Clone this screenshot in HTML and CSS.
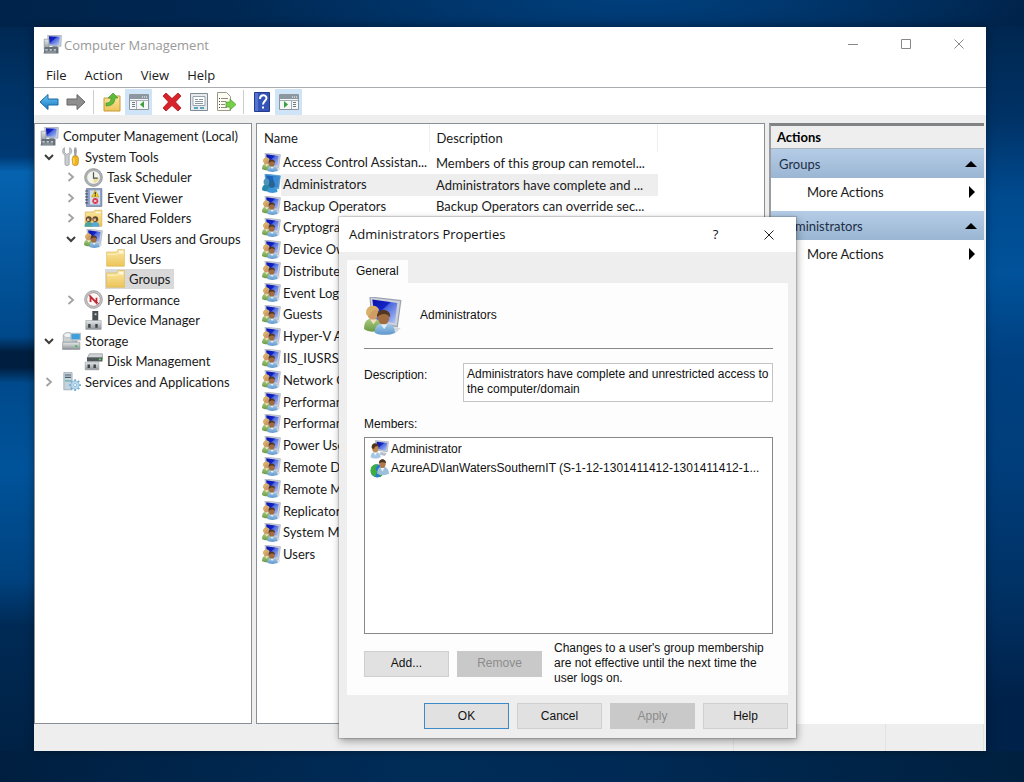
FILE: index.html
```html
<!DOCTYPE html>
<html lang="en">
<head>
    <meta charset="utf-8">
    <meta name="viewport" content="width=device-width, initial-scale=1.0">
    <title>Computer Management</title>
    <link rel="stylesheet" href="styles.css">
</head>
<body>
    <!-- shared icons -->
    <svg class="sprite" aria-hidden="true">
        <defs>
            <linearGradient id="screen" x1="0" y1="0" x2="1" y2="1">
                <stop offset="0" stop-color="#0a12a8"/>
                <stop offset=".4" stop-color="#1424c4"/>
                <stop offset=".45" stop-color="#4a66dc"/>
                <stop offset="1" stop-color="#b9cbf8"/>
            </linearGradient>
            <linearGradient id="gold" x1="0" y1="0" x2="0" y2="1">
                <stop offset="0" stop-color="#fbe7a2"/>
                <stop offset="1" stop-color="#ecc55a"/>
            </linearGradient>
            <linearGradient id="blue" x1="0" y1="0" x2="0" y2="1">
                <stop offset="0" stop-color="#6cc4f2"/>
                <stop offset="1" stop-color="#1479c4"/>
            </linearGradient>
            <linearGradient id="steel" x1="0" y1="0" x2="0" y2="1">
                <stop offset="0" stop-color="#e6e9eb"/>
                <stop offset="1" stop-color="#8b9297"/>
            </linearGradient>
            <linearGradient id="green-shirt" x1="0" y1="0" x2="0" y2="1">
                <stop offset="0" stop-color="#a9cb82"/>
                <stop offset="1" stop-color="#6b9a45"/>
            </linearGradient>
            <linearGradient id="blue-shirt" x1="0" y1="0" x2="0" y2="1">
                <stop offset="0" stop-color="#a9cdeb"/>
                <stop offset="1" stop-color="#5c97cc"/>
            </linearGradient>
        </defs>
        <symbol id="i-computer" viewBox="0 0 32 32">
            <path d="M8 0 31 1 30 19 9 18z" fill="#c9d0dd" stroke="#8d96aa"/>
            <path d="M10 2 28 3 27 17 11 16z" fill="url(#screen)"/>
            <path d="M16 18h8v5h-8z" fill="#8e959f"/>
            <path d="M2 7h8v17H2z" fill="url(#steel)" stroke="#7b838b"/>
            <path d="M3 20h23v11H1z" fill="#667078"/>
            <path d="M4 24h4v2H4zM11 24h4v2h-4zM18 24h4v2h-4zM4 28h18v1H4z" fill="#dfe5e8"/>
        </symbol>
        <symbol id="i-group" viewBox="0 0 32 32">
            <path d="M5 0 31 3 28 25 7 21z" fill="#ccd1dc" stroke="#9ba2b0"/>
            <path d="M7 2 28 5 26 22 9 19z" fill="url(#screen)"/>
            <path d="M22 25l9 1-5 5-6-2z" fill="#d6dade"/>
            <path d="M0 27c0-7 3-9 7-9s7 2 8 9c-4 3-11 3-15 0z" fill="url(#green-shirt)"/>
            <ellipse cx="7.500" cy="13.500" rx="4.800" ry="6" fill="#cf9c66"/>
            <path d="M2 15C0 6 12 5 13 12c-4-3-6 0-7 1s-1 4-4 2z" fill="#d8b168"/>
            <path d="M5 19l3 4 3-4z" fill="#f0e0c0"/>
            <path d="M9 30c0-7 4-8 8-8s9 1 9 8c-4 2.500-13 2.500-17 0z" fill="url(#blue-shirt)"/>
            <ellipse cx="16.500" cy="17.500" rx="4.800" ry="5.800" fill="#a06c40"/>
            <path d="M11 17c-1-8 12-8 11 0-3-4-8-3-11 0z" fill="#523720"/>
            <path d="M14 23l3 4 3-4z" fill="#e2eef8"/>
        </symbol>
        <symbol id="i-group-sel" viewBox="0 0 32 32">
            <path d="M5 0 31 3 28 25 7 21z" fill="#4f9ad6" stroke="#3a87c6"/>
            <path d="M7 2 28 5 26 22 9 19z" fill="#1d63b8"/>
            <path d="M18 4 28 5 26 22 22 21z" fill="#3c8bd2"/>
            <path d="M0 27c0-7 3-9 7-9s7 2 8 9c-4 3-11 3-15 0z" fill="#2c86a8"/>
            <ellipse cx="7.500" cy="13.500" rx="4.800" ry="6" fill="#4d93b8"/>
            <path d="M9 30c0-7 4-8 8-8s9 1 9 8c-4 2.500-13 2.500-17 0z" fill="#3c97d6"/>
            <ellipse cx="16.500" cy="17.500" rx="4.800" ry="5.800" fill="#27648f"/>
        </symbol>
        <symbol id="i-user" viewBox="0 0 32 32">
            <path d="M9 1 31 3 29 20 11 17z" fill="#ccd1dc" stroke="#9ba2b0"/>
            <path d="M11 3 29 5 27 18 13 15z" fill="url(#screen)"/>
            <path d="M17 20l11 2-3 5-8-2z" fill="#b6bfc9"/>
            <path d="M1 29c0-7 4-9 8-9s9 2 9 9c-5 3-13 3-17 0z" fill="#a8c7e4"/>
            <ellipse cx="9" cy="14" rx="5.500" ry="7" fill="#c08a56"/>
            <path d="M3 14C1 3 14 3 15 11c-5-1-7-1-8 4z" fill="#4e3520"/>
            <path d="M6 21l3 5 3-5z" fill="#f3f8fc"/>
        </symbol>
        <symbol id="i-globe-user" viewBox="0 0 32 32">
            <circle cx="12" cy="20" r="11" fill="#2b78cf"/>
            <path d="M2 14c4-6 8-6 11-4l-4 6 3 5-3 9c-8-3-9-9-7-16zM15 24l8 1-6 6z" fill="#3fae42"/>
            <path d="M12 25c0-9 4-12 9-12s11 3 11 12c-6 3-15 3-20 0z" fill="#9dbfdc"/>
            <ellipse cx="21" cy="8" rx="5.500" ry="7" fill="#b07a4c"/>
            <path d="M15 7c0-9 12-9 12 0-4-2-8-2-12 0z" fill="#4e3520"/>
            <path d="M18 15l3 6 3-6z" fill="#f3f8fc"/>
        </symbol>
        <symbol id="i-tools" viewBox="0 0 32 32">
            <path d="M4 1v8l3 3h3l3-3V1c5 3 4 10-1 13v15c0 3-7 3-7 0V14C0 11 0 4 4 1z" fill="#c9ced1" stroke="#7f868b"/>
            <path d="M21 1h3l1 5-1 10h-3L20 6z" fill="#989ea2"/>
            <path d="M19 15h7l2 5-1 9c-1 3-8 3-9 0l-1-9z" fill="#f0b51e" stroke="#b77a08"/>
            <path d="M20 19v9" stroke="#ffe07b" stroke-width="2"/>
        </symbol>
        <symbol id="i-clock" viewBox="0 0 32 32">
            <circle cx="16" cy="16" r="15" fill="#b1b5b9" stroke="#777c80"/>
            <circle cx="16" cy="16" r="11.500" fill="#f3f4ec" stroke="#8d9295"/>
            <path d="M16 16h9A9 9 0 0 1 16 25z" fill="#ecdd9b"/>
            <path d="M16 7v10h7" fill="none" stroke="#4a525c" stroke-width="2"/>
        </symbol>
        <symbol id="i-event" viewBox="0 0 32 32">
            <path d="M4 1h26v30H4z" fill="#8fa3c8" stroke="#50617f"/>
            <path d="M10 4h17v24H10z" fill="#d5deef"/>
            <path d="M2 5h5M2 10h5M2 15h5M2 20h5M2 25h5" stroke="#4c5669" stroke-width="2"/>
            <path d="M19 4l6 11H13z" fill="#f7d227" stroke="#b89608"/>
            <path d="M19 7v4M19 12v2" stroke="#222" stroke-width="2"/>
            <circle cx="19" cy="22" r="5" fill="#d93a4c"/>
            <path d="M17 20l4 4M21 20l-4 4" stroke="#fff" stroke-width="1.500"/>
        </symbol>
        <symbol id="i-shared" viewBox="0 0 32 32">
            <path d="M2 5h14l2-3h12v27H2z" fill="url(#gold)" stroke="#d0a23a"/>
            <path d="M20 5h8v2h-8z" fill="#fffbe8"/>
            <path d="M1 30c0-6 3-8 7-8s7 2 7 8z" fill="#4aa497"/>
            <circle cx="8" cy="17" r="5" fill="#69492f"/>
            <path d="M12 30c0-6 3-8 7-8s7 2 7 8z" fill="#58a7d6"/>
            <circle cx="19" cy="17" r="5" fill="#69492f"/>
            <path d="M5 18h4M16 18h4" stroke="#e5c49b" stroke-width="4"/>
        </symbol>
        <symbol id="i-folder" viewBox="0 0 32 32">
            <path d="M1 5h17l2-4h11v28H1z" fill="url(#gold)" stroke="#dab453"/>
            <path d="M22 3h7v4h-7z" fill="#fffbe8"/>
            <path d="M2 9h16l3-2h9" fill="none" stroke="#fff3c8" stroke-width="1.500"/>
        </symbol>
        <symbol id="i-perf" viewBox="0 0 32 32">
            <circle cx="16" cy="16" r="15" fill="#c3c6c8" stroke="#85898c"/>
            <circle cx="16" cy="16" r="11.500" fill="#fdf7f6" stroke="#9d7777"/>
            <path d="M11 20v-9l10 11v-9" fill="none" stroke="#cf2a34" stroke-width="3"/>
            <path d="M8 9l17 14" stroke="#8d3135" stroke-width="1.500"/>
        </symbol>
        <symbol id="i-device" viewBox="0 0 32 32">
            <path d="M14 0h10v17H14z" fill="#4a4e51"/>
            <path d="M18 4h3v3h-3z" fill="#d5d8da"/>
            <path d="M3 16h26v15H3z" fill="url(#steel)" stroke="#9b9fa2"/>
            <path d="M7 22h4v6H7zM19 22h4v6h-4z" fill="#3c4043"/>
        </symbol>
        <symbol id="i-storage" viewBox="0 0 32 32">
            <path d="M2 8c0-7 16-7 16 0v11H2z" fill="#cbd0d3" stroke="#8b9195"/>
            <ellipse cx="10" cy="7" rx="7" ry="4" fill="#eff1f2" stroke="#a3a9ac"/>
            <path d="M15 4h16v11H15z" fill="#3d9fdb" stroke="#b7c3ca" stroke-width="2"/>
            <path d="M19 16h7v3h-7z" fill="#a3acb2"/>
            <path d="M1 19h29v12H1z" fill="url(#steel)" stroke="#7e868a"/>
            <path d="M22 24h4v3h-4z" fill="#46bb4e"/>
        </symbol>
        <symbol id="i-disk" viewBox="0 0 32 32">
            <path d="M9 3 31 3 31 12 5 12z" fill="#d0d4d7" stroke="#7e8488"/>
            <path d="M5 9h26v7H5z" fill="#4e5558"/>
            <path d="M25 11h4v3h-4z" fill="#55cc61"/>
            <path d="M2 17h23v13H2z" fill="url(#steel)" stroke="#9b9fa2"/>
            <path d="M6 21h4v6H6zM16 21h4v6h-4z" fill="#3c4043"/>
        </symbol>
        <symbol id="i-services" viewBox="0 0 32 32">
            <path d="M3 1h14v29H3z" fill="#c3d2dc" stroke="#8295a2"/>
            <path d="M5 5h10M5 9h10" stroke="#4d5e6b" stroke-width="2"/>
            <path d="M5 14h10v2H5z" fill="#5fb0a3"/>
            <path d="M22 12v20M12 22h20M15 15l14 14M29 15 15 29" stroke="#7aabcb" stroke-width="3"/>
            <circle cx="22" cy="22" r="7" fill="#b7dcf2" stroke="#7aabcb"/>
            <circle cx="22" cy="22" r="2.500" fill="#fff" stroke="#6a9fc1"/>
        </symbol>
        <symbol id="i-chevron-right" viewBox="0 0 12 12">
            <path d="M3.500 2 8 6 3.500 10" fill="none" stroke="#a2a2a2" stroke-width="1.800"/>
        </symbol>
        <symbol id="i-chevron-down" viewBox="0 0 12 12">
            <path d="M2 4 6 8 10 4" fill="none" stroke="#3d3d3d" stroke-width="2"/>
        </symbol>
    </svg>

    <main class="desktop">
        <section class="window" aria-label="Computer Management">
            <header class="titlebar">
                <svg class="icon"><use href="#i-computer"/></svg>
                <h1 class="title">Computer Management</h1>
                <div class="window-controls">
                    <button type="button" aria-label="Minimize"><svg viewBox="0 0 12 12"><path d="M1 6.500h10"/></svg></button>
                    <button type="button" aria-label="Maximize"><svg viewBox="0 0 12 12"><path d="M1.500 1.500h9v9h-9z"/></svg></button>
                    <button type="button" aria-label="Close"><svg viewBox="0 0 12 12"><path d="M1.500 1.500l9 9M10.500 1.500l-9 9"/></svg></button>
                </div>
            </header>
            <nav class="menubar">
                <button type="button">File</button>
                <button type="button">Action</button>
                <button type="button">View</button>
                <button type="button">Help</button>
            </nav>
            <div class="toolbar">
                <button type="button" aria-label="Back">
                    <svg viewBox="0 0 20 20"><path d="M1 10 9 2.500V7h10v6H9v4.500z" fill="url(#blue)" stroke="#1b6aa8"/></svg>
                </button>
                <button type="button" aria-label="Forward">
                    <svg viewBox="0 0 20 20"><path d="M19 10 11 2.500V7H1v6h10v4.500z" fill="#8e8e8e" stroke="#666"/></svg>
                </button>
                <span class="divider"></span>
                <button type="button" aria-label="Up one level">
                    <svg viewBox="0 0 20 20"><path d="M2 6h7l2-2h7v15H2z" fill="url(#gold)" stroke="#c89a34"/><path d="M4 11c4 0 5-2 5-5H6l5-5 5 5h-3c0 5-3 8-9 8z" fill="#5dbb3c" stroke="#3c8d25" stroke-width=".6"/></svg>
                </button>
                <button type="button" class="on" aria-label="Show or hide console tree">
                    <svg viewBox="0 0 20 20"><path d="M.500 2.500h19v15H.500z" fill="#f4f6f7" stroke="#8d969d"/><path d="M1 3h18v4H1z" fill="#8c979f"/><path d="M13 5h1M15 5h1M17 5h1" stroke="#fff"/><path d="M7.500 8v9M1 8.500h18" stroke="#a5aeb4"/><path d="M3 10.500h3M3 12.500h3M3 14.500h3" stroke="#6d7b85"/><path d="M15 9v7l-4-3.500z" fill="#3da03f"/></svg>
                </button>
                <span class="gap"></span>
                <button type="button" aria-label="Delete">
                    <svg viewBox="0 0 20 20"><path d="M1 4 4 1l6 5.500L16 1l3 3-5.500 6 5.500 6-3 3-6-5.500L4 19l-3-3 5.500-6z" fill="#d8232b" stroke="#a3161c" stroke-width=".8"/></svg>
                </button>
                <button type="button" aria-label="Properties">
                    <svg viewBox="0 0 20 20"><path d="M1.500 1.500h17v17h-17z" fill="#e6eaec" stroke="#7f8c94"/><path d="M4 4.500h12v9H4z" fill="#fff" stroke="#98a4ab"/><path d="M6 7.500h3M10 7.500h4M6 9.500h8M6 11.500h8" stroke="#8b979e"/><path d="M5 16h4M11 16h4" stroke="#5aa7bb" stroke-width="2"/></svg>
                </button>
                <button type="button" aria-label="Export list">
                    <svg viewBox="0 0 20 20"><path d="M1.500.500h9l4 4v14h-13z" fill="#fffef2" stroke="#9a9a8a"/><path d="M3 6.500h1M3 9.500h1M3 12.500h1M3 15.500h1" stroke="#444"/><path d="M5 6.500h7M5 9.500h5M5 12.500h4M5 15.500h6" stroke="#8f8f84"/><path d="M10 10h4V7l6 5.500L14 18v-3h-4z" fill="#76cf48" stroke="#4a9c2a" stroke-width=".7"/></svg>
                </button>
                <span class="divider"></span>
                <button type="button" aria-label="Help">
                    <svg viewBox="0 0 20 20"><path d="M2.500.500h15v19h-15z" fill="#3454b8" stroke="#24398c"/><path d="M3 1h3v18H3z" fill="#5574d2"/><path d="M8 7c0-5 6.500-4.500 6.500-1 0 3-3.500 3-3.500 6.500" fill="none" stroke="#fff" stroke-width="2"/><path d="M10 14.500h2v2h-2z" fill="#fff"/></svg>
                </button>
                <button type="button" class="on" aria-label="Show or hide action pane">
                    <svg viewBox="0 0 20 20"><path d="M.500 2.500h19v15H.500z" fill="#f4f6f7" stroke="#8d969d"/><path d="M1 3h18v4H1z" fill="#8c979f"/><path d="M13 5h1M15 5h1M17 5h1" stroke="#fff"/><path d="M12.500 8v9M1 8.500h18" stroke="#a5aeb4"/><path d="M14 10.500h3M14 12.500h3M14 14.500h3" stroke="#6d7b85"/><path d="M5 9v7l4-3.500z" fill="#3da03f"/></svg>
                </button>
            </div>

            <div class="panes">
                <ul class="pane tree">
                    <li class="root"><a href="#"><svg class="icon"><use href="#i-computer"/></svg>Computer Management (Local)</a></li>
                    <li class="l1"><svg class="chevron"><use href="#i-chevron-down"/></svg><a href="#"><svg class="icon"><use href="#i-tools"/></svg>System Tools</a></li>
                    <li class="l2"><svg class="chevron"><use href="#i-chevron-right"/></svg><a href="#"><svg class="icon"><use href="#i-clock"/></svg>Task Scheduler</a></li>
                    <li class="l2"><svg class="chevron"><use href="#i-chevron-right"/></svg><a href="#"><svg class="icon"><use href="#i-event"/></svg>Event Viewer</a></li>
                    <li class="l2"><svg class="chevron"><use href="#i-chevron-right"/></svg><a href="#"><svg class="icon"><use href="#i-shared"/></svg>Shared Folders</a></li>
                    <li class="l2"><svg class="chevron"><use href="#i-chevron-down"/></svg><a href="#"><svg class="icon"><use href="#i-group"/></svg>Local Users and Groups</a></li>
                    <li class="l3"><svg class="chevron"></svg><a href="#"><svg class="icon"><use href="#i-folder"/></svg>Users</a></li>
                    <li class="l3"><svg class="chevron"></svg><a href="#" class="selected"><svg class="icon"><use href="#i-folder"/></svg>Groups</a></li>
                    <li class="l2"><svg class="chevron"><use href="#i-chevron-right"/></svg><a href="#"><svg class="icon"><use href="#i-perf"/></svg>Performance</a></li>
                    <li class="l2"><svg class="chevron"></svg><a href="#"><svg class="icon"><use href="#i-device"/></svg>Device Manager</a></li>
                    <li class="l1"><svg class="chevron"><use href="#i-chevron-down"/></svg><a href="#"><svg class="icon"><use href="#i-storage"/></svg>Storage</a></li>
                    <li class="l2"><svg class="chevron"></svg><a href="#"><svg class="icon"><use href="#i-disk"/></svg>Disk Management</a></li>
                    <li class="l1"><svg class="chevron"><use href="#i-chevron-right"/></svg><a href="#"><svg class="icon"><use href="#i-services"/></svg>Services and Applications</a></li>
                </ul>

                <div class="pane list">
                    <table class="groups">
                        <thead>
                            <tr><th class="col-name">Name</th><th class="col-desc">Description</th></tr>
                        </thead>
                        <tbody>
                            <tr><td><svg class="icon"><use href="#i-group"/></svg>Access Control Assistan...</td><td>Members of this group can remotel...</td></tr>
                            <tr class="selected"><td><svg class="icon"><use href="#i-group-sel"/></svg>Administrators</td><td>Administrators have complete and ...</td></tr>
                            <tr><td><svg class="icon"><use href="#i-group"/></svg>Backup Operators</td><td>Backup Operators can override sec...</td></tr>
                            <tr><td><svg class="icon"><use href="#i-group"/></svg>Cryptographic Operators</td><td></td></tr>
                            <tr><td><svg class="icon"><use href="#i-group"/></svg>Device Owners</td><td></td></tr>
                            <tr><td><svg class="icon"><use href="#i-group"/></svg>Distributed COM Users</td><td></td></tr>
                            <tr><td><svg class="icon"><use href="#i-group"/></svg>Event Log Readers</td><td></td></tr>
                            <tr><td><svg class="icon"><use href="#i-group"/></svg>Guests</td><td></td></tr>
                            <tr><td><svg class="icon"><use href="#i-group"/></svg>Hyper-V Administrators</td><td></td></tr>
                            <tr><td><svg class="icon"><use href="#i-group"/></svg>IIS_IUSRS</td><td></td></tr>
                            <tr><td><svg class="icon"><use href="#i-group"/></svg>Network Configuration</td><td></td></tr>
                            <tr><td><svg class="icon"><use href="#i-group"/></svg>Performance Log Users</td><td></td></tr>
                            <tr><td><svg class="icon"><use href="#i-group"/></svg>Performance Monitor</td><td></td></tr>
                            <tr><td><svg class="icon"><use href="#i-group"/></svg>Power Users</td><td></td></tr>
                            <tr><td><svg class="icon"><use href="#i-group"/></svg>Remote Desktop Users</td><td></td></tr>
                            <tr><td><svg class="icon"><use href="#i-group"/></svg>Remote Management</td><td></td></tr>
                            <tr><td><svg class="icon"><use href="#i-group"/></svg>Replicator</td><td></td></tr>
                            <tr><td><svg class="icon"><use href="#i-group"/></svg>System Managed</td><td></td></tr>
                            <tr><td><svg class="icon"><use href="#i-group"/></svg>Users</td><td></td></tr>
                        </tbody>
                    </table>
                </div>

                <aside class="actions">
                    <h2>Actions</h2>
                    <button type="button" class="section">Groups <svg viewBox="0 0 12 12"><path d="M6 3l6 6H0z"/></svg></button>
                    <button type="button" class="more">More Actions <svg viewBox="0 0 12 12"><path d="M4 0l6 6-6 6z"/></svg></button>
                    <button type="button" class="section">Administrators <svg viewBox="0 0 12 12"><path d="M6 3l6 6H0z"/></svg></button>
                    <button type="button" class="more">More Actions <svg viewBox="0 0 12 12"><path d="M4 0l6 6-6 6z"/></svg></button>
                </aside>
            </div>

            <footer class="statusbar"><span></span><span></span><span></span></footer>
        </section>

        <form class="dialog" role="dialog" aria-labelledby="dialog-title">
            <header class="dialog-title">
                <h2 id="dialog-title">Administrators Properties</h2>
                <button type="button" aria-label="Help">?</button>
                <button type="button" aria-label="Close"><svg viewBox="0 0 12 12"><path d="M1.500 1.500l9 9M10.500 1.500l-9 9"/></svg></button>
            </header>
            <div class="dialog-body">
                <button type="button" class="tab">General</button>
                <div class="sheet">
                    <div class="identity">
                        <svg class="icon-large"><use href="#i-group"/></svg>
                        <span>Administrators</span>
                    </div>
                    <div class="field">
                        <label for="description">Description:</label>
                        <textarea id="description" rows="2">Administrators have complete and unrestricted access to the computer/domain</textarea>
                    </div>
                    <p class="members-label" id="members-label">Members:</p>
                    <ul class="members" aria-labelledby="members-label">
                        <li><svg class="icon"><use href="#i-user"/></svg>Administrator</li>
                        <li><svg class="icon"><use href="#i-globe-user"/></svg>AzureAD\IanWatersSouthernIT (S-1-12-1301411412-1301411412-1...</li>
                    </ul>
                    <div class="member-actions">
                        <button type="button" class="btn">Add...</button>
                        <button type="button" class="btn" disabled>Remove</button>
                        <p>Changes to a user's group membership are not effective until the next time the user logs on.</p>
                    </div>
                </div>
                <div class="dialog-buttons">
                    <button type="button" class="btn default">OK</button>
                    <button type="button" class="btn">Cancel</button>
                    <button type="button" class="btn" disabled>Apply</button>
                    <button type="button" class="btn">Help</button>
                </div>
            </div>
        </form>
    </main>
</body>
</html>
```

FILE: styles.css
```css
* {
    box-sizing: border-box;
    margin: 0;
    padding: 0;
}
body {
    font-family: "Open Sans", "Noto Sans", sans-serif;
    font-size: 13px;
    color: #1a1a1a;
}
button {
    font: inherit;
    color: inherit;
    background: none;
    border: 0;
}
a {
    color: inherit;
    text-decoration: none;
}
ul {
    list-style: none;
}
svg {
    display: block;
    flex: none;
}
.sprite {
    position: absolute;
    width: 0;
    height: 0;
}
.icon {
    width: 19px;
    height: 19px;
}

/* desktop */
.desktop {
    position: relative;
    display: flex;
    min-height: 100vh;
    padding: 27px 38px 31px 34px;
    background:
        radial-gradient(ellipse 400px 60px at 62% 0, #003f7c, transparent) top / 100% 60px no-repeat,
        linear-gradient(90deg, #001f40, #002c58 40%, #002a55 60%, #00203f) bottom / 100% 31px no-repeat,
        linear-gradient(90deg, #00234a, #002f60 60%, #00234a) top / 100% 27px no-repeat,
        linear-gradient(#00234a, #003468 12%, #003a74 20%, #0663b0 22%, #00488a 43%, #001f40 45%, #001f40 47%, #004a8c 49%, #00539a 60%, #00427f 74%, #002a55 80%, #001f40) left / 50% 100% no-repeat,
        linear-gradient(#002349, #003266 15%, #004a8e 25%, #00529a 35%, #004080 46%, #003d7a 60%, #003265 75%, #002149 90%) right / 50% 100% no-repeat;
}

/* main window */
.window {
    flex: 1;
    display: flex;
    flex-direction: column;
    min-width: 0;
    background: #eee;
    box-shadow: 0 0 8px rgba(0, 0, 0, 0.4);
}
.titlebar {
    display: flex;
    align-items: center;
    gap: 2px;
    height: 35px;
    padding: 0 1px 0 9px;
    background: #fff;
    color: #999;
}
.title {
    flex: 1;
    font-size: 13px;
    font-weight: normal;
}
.window-controls {
    display: flex;
    align-self: flex-start;
}
.window-controls button {
    display: grid;
    place-items: center;
    width: 53px;
    height: 33px;
}
.window-controls svg,
.dialog-title svg {
    width: 12px;
    height: 12px;
    fill: none;
    stroke: #888;
}
.menubar {
    display: flex;
    height: 26px;
    padding-left: 3px;
    background: #fff;
    border-bottom: 1px solid #a9adb0;
}
.menubar button {
    padding: 0 9px;
}
.toolbar {
    display: flex;
    align-items: center;
    height: 27px;
    padding-left: 1px;
    background: #fff;
}
.toolbar button {
    display: grid;
    place-items: center;
    width: 27px;
    height: 26px;
}
.toolbar svg {
    width: 20px;
    height: 20px;
}
.toolbar .on {
    background: #cfe5f7;
}
.divider {
    width: 1px;
    height: 24px;
    margin: 0 4px;
    background: #ccc;
}
.gap {
    width: 6px;
}

/* panes */
.panes {
    flex: 1;
    display: grid;
    grid-template-columns: 218px 1fr 215px;
    gap: 4px;
    padding: 8px 2px 0 0;
    font-family: Lato, "Open Sans", sans-serif;
}
.pane {
    background: #fff;
    border: 1px solid #8a8f95;
}
.tree {
    display: grid;
    grid-template-rows: repeat(13, 1fr);
    align-items: center;
    padding: 2px 0 331px 1px;
}
.tree li {
    display: flex;
    align-items: center;
    height: 20px;
    white-space: nowrap;
}
.tree a {
    display: flex;
    align-items: center;
    gap: 4px;
    height: 20px;
    padding: 0 4px 0 1px;
}
.tree .root {
    padding-left: 3px;
}
.tree .l2 {
    padding-left: 22px;
}
.tree .l3 {
    padding-left: 44px;
}
.chevron {
    width: 12px;
    height: 12px;
    margin: 0 6px 0 7px;
}
.tree .selected {
    background: #d9d9d9;
}
.list {
    min-width: 0;
    overflow: hidden;
}
.groups {
    width: 401px;
    height: 442px;
    table-layout: fixed;
    border-collapse: collapse;
    white-space: nowrap;
}
.groups th {
    height: 28px;
    padding-left: 7px;
    font-weight: normal;
    text-align: left;
    border-right: 1px solid #eee;
}
.groups .col-name {
    width: 172px;
}
.groups td {
    padding-left: 7px;
    line-height: 20px;
}
.groups td:first-child {
    display: flex;
    align-items: center;
    gap: 2px;
    padding-left: 5px;
}
.groups .selected {
    background: linear-gradient(90deg, transparent 24px, #eee 24px);
}

/* actions */
.actions {
    background: #fff;
    border-top: 3px solid #808284;
    border-left: 2px solid #9a9da0;
}
.actions h2 {
    height: 23px;
    padding-left: 6px;
    font-size: 13px;
    line-height: 23px;
    color: #000;
    background: #eee;
    border-bottom: 1px solid #a9b4bd;
}
.actions button {
    display: flex;
    align-items: center;
    justify-content: space-between;
    width: 100%;
    padding-right: 7px;
}
.actions svg {
    width: 12px;
    height: 12px;
}
.actions .section {
    height: 29px;
    padding-left: 8px;
    color: #1c2f45;
    background: linear-gradient(#b5cce6, #9ab6d3);
}
.actions .section svg {
    fill: #000;
}
.actions .more {
    height: 28px;
    margin-bottom: 5px;
    padding-left: 36px;
}
.statusbar {
    display: grid;
    grid-template-columns: 1fr 152px 98px;
    height: 27px;
    margin-right: 2px;
}
.statusbar span {
    border-right: 1px solid #e2e2e2;
}

/* properties dialog */
.dialog {
    position: absolute;
    top: 217px;
    left: 339px;
    width: 457px;
    font-family: "Liberation Sans", Arial, sans-serif;
    font-size: 12px;
    line-height: 15px;
    color: #111;
    background: #eee;
    box-shadow: 0 0 1px 1px rgba(0, 0, 0, 0.15), 1px 3px 8px rgba(0, 0, 0, 0.35);
}
.dialog-title {
    display: flex;
    align-items: center;
    height: 35px;
    padding: 0 1px 0 10px;
    font-family: "Open Sans", "Noto Sans", sans-serif;
    font-size: 13px;
    background: #fff;
}
.dialog-title h2 {
    flex: 1;
    font-size: 13px;
    font-weight: normal;
}
.dialog-title button {
    display: grid;
    place-items: center;
    width: 53px;
    height: 33px;
}
.dialog-title svg {
    stroke: #222;
}
.dialog-body {
    padding: 8px 8px 9px;
}
.tab {
    display: block;
    height: 23px;
    padding: 0 9px;
    background: #fdfdfd;
}
.sheet {
    padding: 13px 15px 9px 17px;
    background: #fdfdfd;
}
.identity {
    display: flex;
    align-items: center;
    gap: 18px;
    height: 53px;
    padding-bottom: 13px;
    border-bottom: 1px solid #888;
}
.icon-large {
    width: 38px;
    height: 38px;
}
.field {
    display: flex;
    margin-top: 14px;
}
.field label {
    width: 99px;
    padding-top: 5px;
}
.field textarea {
    flex: 1;
    height: 39px;
    padding: 3px;
    font: inherit;
    color: inherit;
    background: #fff;
    border: 1px solid #c4c4c4;
    resize: none;
    overflow: hidden;
}
.members-label {
    margin: 15px 0 5px;
}
.members {
    height: 197px;
    padding: 2px 5px;
    background: #fff;
    border: 1px solid #888;
}
.members li {
    display: flex;
    align-items: center;
    gap: 2px;
    height: 19px;
    white-space: nowrap;
}
.member-actions {
    display: grid;
    grid-template-columns: 85px 85px 1fr;
    align-items: center;
    gap: 8px;
    margin-top: 7px;
}
.member-actions p {
    padding-left: 4px;
}
.btn {
    height: 26px;
    background: #e1e1e1;
    border: 1px solid #cfcfcf;
}
.btn:disabled {
    color: #8c8c8c;
    background: #c9c9c9;
    border-color: #c9c9c9;
}
.btn.default {
    border-color: #3c8ac8;
}
.dialog-buttons {
    display: grid;
    grid-template-columns: repeat(4, 85px);
    justify-content: end;
    gap: 8px;
    margin-top: 8px;
}
```
